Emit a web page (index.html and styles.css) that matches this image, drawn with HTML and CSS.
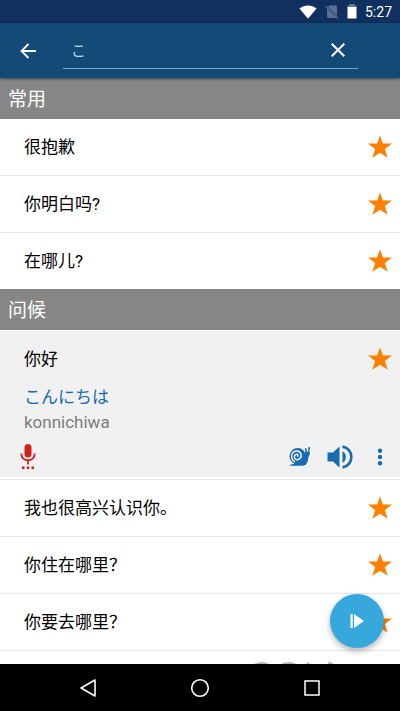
FILE: index.html
```html
<!DOCTYPE html>
<html lang="zh-CN">
<head>
<meta charset="utf-8">
<meta name="viewport" content="width=device-width, initial-scale=1">
<title>常用</title>
<link rel="stylesheet" href="styles.css">
</head>
<body>
<svg class="defs" aria-hidden="true">
  <symbol id="star" viewBox="0 0 24 24"><path d="M12 .4 14.9 8.4 24 8.6 16.9 14.1 19.6 22.8 12 17.8 4.4 22.8 7.1 14.1 0 8.6 9.1 8.4Z"/></symbol>
</svg>

<div class="status">
  <svg width="18" height="14" viewBox="0 0 18 14" aria-hidden="true"><path fill="#fff" d="M.5 3.6C5.500-.6 12.500-.6 17.500 3.600L9 13.800Z"/></svg>
  <svg width="14" height="14" viewBox="0 0 14 14" aria-hidden="true"><path fill="#5a6e95" d="M4.500.500H10.500Q12 .500 12 2V10.800L3 1.800ZM2 3.200 11.500 13H3.500Q2 13 2 11.500Z"/><path stroke="#5a6e95" stroke-width="1.200" d="M.500.800 13 13.300"/></svg>
  <svg class="battery" width="10" height="15" viewBox="0 0 10 15" aria-hidden="true"><path fill="#6b7da3" d="M2.500 0H7.500V1.500H9.500V4H.500V1.500H2.500Z"/><path fill="#fff" d="M.500 3H9.500V14.500H.500Z"/></svg>
  <time>5:27</time>
</div>

<header class="appbar">
  <button class="icon-btn" aria-label="返回"><svg width="16" height="16" viewBox="0 0 16 16"><path fill="none" stroke="#fff" stroke-width="1.800" d="M16 8H2M8.500 1 1.500 8 8.500 15"/></svg></button>
  <div class="search">
    <input type="text" value="こ" aria-label="搜索">
    <button class="icon-btn" aria-label="清除"><svg width="14" height="14" viewBox="0 0 14 14"><path fill="none" stroke="#fff" stroke-width="2" d="M.700.700 13.300 13.300M13.300.700.700 13.300"/></svg></button>
  </div>
</header>

<main class="content">
  <section>
    <h2>常用</h2>
    <ul>
      <li class="row"><span>很抱歉</span><button class="star" aria-label="收藏"><svg><use href="#star"/></svg></button></li>
      <li class="row"><span>你明白吗?</span><button class="star" aria-label="收藏"><svg><use href="#star"/></svg></button></li>
      <li class="row"><span>在哪儿?</span><button class="star" aria-label="收藏"><svg><use href="#star"/></svg></button></li>
    </ul>
  </section>
  <section>
    <h2>问候</h2>
    <ul>
      <li class="open">
        <div class="row"><span>你好</span><button class="star" aria-label="收藏"><svg><use href="#star"/></svg></button></div>
        <p class="kana" lang="ja">こんにちは</p>
        <p class="romaji">konnichiwa</p>
        <div class="tools">
          <button class="mic" aria-label="录音"><svg width="16" height="26" viewBox="0 0 16 26"><rect x="4.500" y="0" width="7" height="13.500" rx="3.500" fill="#d3201f"/><path fill="none" stroke="#d3201f" stroke-width="1.800" d="M1.200 9.500C1.200 18.500 14.800 18.500 14.800 9.500M8 16V20.500"/><path fill="#d3201f" d="M2 22.500H4.500V25H2ZM6.800 22.500H9.200V25H6.800ZM11.500 22.500H14V25H11.500Z"/></svg></button>
          <button aria-label="慢速播放"><svg width="22" height="20" viewBox="0 0 22 20"><path fill="#176bb0" d="M.500 18.600C2 17 4 17.200 6 16.500L14 14.500C16 12.500 15.800 8.500 15.600 6.500C16.200 4.500 18 4.300 20 4.800C21.200 5.300 21.300 7.500 20.200 8.500C19.200 9.500 19.300 12 18.600 14.500C17.800 17.300 16 18.800 13 18.800H1Q.200 19 .500 18.600Z"/><circle cx="8.700" cy="9.300" r="8.200" fill="#176bb0"/><path fill="none" stroke="#f1f1f1" stroke-width="1.500" d="M8.300 9.700C9.800 8.500 8.600 6.900 7 7.500C4.800 8.300 4.700 11.700 7.200 12.500C10.300 13.400 13 10.300 12 7.200C10.700 3.300 5.700 3 3.500 6.100C1.600 9 2.600 13 5.800 14.900"/><path stroke="#176bb0" stroke-width="1.300" d="M17.300 6 16.800 2.200M19.700 5.500 20.200 1"/><circle cx="16.700" cy="2.300" r="1" fill="#176bb0"/><circle cx="20.200" cy="1.100" r="1" fill="#176bb0"/></svg></button>
          <button aria-label="播放"><svg width="26" height="24" viewBox="0 0 26 24"><path fill="#176bb0" d="M.500 7.500H6L12.500 1.500V22.500L6 16.500H.500ZM15.500 6.200C20 8 20 16 15.500 17.800Z"/><path fill="none" stroke="#176bb0" stroke-width="2.600" d="M15.500 1.600C27.300 3.500 27.300 20.500 15.500 22.400"/></svg></button>
          <button aria-label="更多"><svg width="6" height="18" viewBox="0 0 6 18"><g fill="#176bb0"><circle cx="3" cy="2.800" r="2.200"/><circle cx="3" cy="9" r="2.200"/><circle cx="3" cy="15.200" r="2.200"/></g></svg></button>
        </div>
      </li>
      <li class="row"><span>我也很高兴认识你。</span><button class="star" aria-label="收藏"><svg><use href="#star"/></svg></button></li>
      <li class="row"><span>你住在哪里？</span><button class="star" aria-label="收藏"><svg><use href="#star"/></svg></button></li>
      <li class="row"><span>你要去哪里？</span><button class="star" aria-label="收藏"><svg><use href="#star"/></svg></button></li>
      <li class="partial"><svg width="84" height="14" viewBox="0 0 84 14" aria-hidden="true"><path fill="#b5b5b5" d="M1 14Q11 8 20 14ZM28 14Q38 8 47 14ZM54 14 57 11 60 14ZM76 14 78 10.500 84 13.500V14Z"/></svg></li>
    </ul>
  </section>
  <button class="fab" aria-label="全部播放"><svg width="14" height="14" viewBox="0 0 14 14"><path fill="#fff" d="M.500 0H2.700V14H.500ZM4 0 14 7 4 14Z"/></svg></button>
</main>

<nav class="navbar">
  <button aria-label="后退"><svg width="18" height="20" viewBox="0 0 18 20"><path fill="none" stroke="#fff" stroke-width="1.600" stroke-linejoin="round" d="M16 2V18L2 10Z"/></svg></button>
  <button aria-label="主页"><svg width="20" height="20" viewBox="0 0 20 20"><circle cx="10" cy="10" r="8.300" fill="none" stroke="#fff" stroke-width="1.600"/></svg></button>
  <button aria-label="最近"><svg width="18" height="18" viewBox="0 0 18 18"><rect x="2" y="2" width="14" height="14" fill="none" stroke="#fff" stroke-width="1.500"/></svg></button>
</nav>
</body>
</html>
```
FILE: styles.css
```css
* {
  box-sizing: border-box;
}

body {
  margin: 0;
  height: 100vh;
  display: flex;
  flex-direction: column;
  overflow: hidden;
  background: #fff;
  color: #000;
  font: 17px/24px Roboto, "Noto Sans CJK SC", sans-serif;
}

button {
  display: flex;
  align-items: center;
  justify-content: center;
  padding: 0;
  border: 0;
  background: none;
}

ul,
h2,
p {
  margin: 0;
  padding: 0;
  list-style: none;
}

.defs {
  display: none;
}

.status {
  flex: none;
  display: flex;
  align-items: center;
  justify-content: flex-end;
  gap: 8px;
  height: 23px;
  padding-right: 8px;
  background: #12305f;
  color: #fff;
  font-size: 14px;
}

.status time {
  line-height: 24px;
}

.appbar {
  flex: none;
  display: flex;
  align-items: center;
  gap: 23px;
  height: 55px;
  padding: 0 42px 0 16px;
  background: #134a78;
  box-shadow: 0 1px 3px rgba(0, 0, 0, 0.5);
  position: relative;
  z-index: 1;
}

.icon-btn {
  flex: none;
  width: 24px;
  height: 24px;
}

.search {
  flex: 1;
  min-width: 0;
  display: flex;
  align-items: center;
  height: 36px;
  padding: 0 8px;
  border-bottom: 1px solid #7fa3c8;
}

.search input {
  flex: 1;
  min-width: 0;
  padding: 0;
  border: 0;
  outline: 0;
  background: none;
  color: #b9dcf5;
  font: 15px/24px "Noto Sans CJK JP", sans-serif;
}

.content {
  position: relative;
  flex: 1;
  min-height: 0;
  overflow: hidden;
}

h2 {
  height: 41px;
  padding: 2px 0 0 8px;
  background: #868686;
  color: #fff;
  font-size: 19px;
  font-weight: 400;
  line-height: 40px;
}

.row {
  display: flex;
  align-items: center;
  justify-content: space-between;
  height: 56px;
  padding: 0 8px 0 24px;
}

.row span {
  line-height: 26px;
}

li.row {
  height: 57px;
  border-bottom: 1px solid #e8e8e8;
}

li.row:last-child {
  height: 56px;
  border-bottom: 0;
}

.star,
.star svg {
  width: 24px;
  height: 24px;
  fill: #ff8000;
}

.open {
  height: 150px;
  padding-bottom: 2px;
  border-top: 1px solid #fff;
  border-bottom: 1px solid #e8e8e8;
  background: #f1f1f1 content-box;
}

.kana,
.romaji {
  padding-left: 24px;
  line-height: 26px;
}

.kana {
  margin-top: -4px;
  color: #176bb0;
  font-family: "Noto Sans CJK JP", sans-serif;
}

.romaji {
  color: #7d7d7d;
}

.tools {
  display: flex;
  align-items: center;
  gap: 16px;
  height: 44px;
  padding: 0 17px 0 20px;
}

.tools .mic {
  margin-right: auto;
}

.tools button:last-child {
  margin-left: 8px;
}

.partial {
  height: 56px;
  padding-left: 251px;
}

.partial svg {
  display: block;
}

.fab {
  position: absolute;
  right: 16px;
  bottom: 16px;
  width: 54px;
  height: 54px;
  border-radius: 50%;
  background: #36a8dc;
  box-shadow: 0 3px 6px rgba(0, 0, 0, 0.3);
}

.navbar {
  flex: none;
  display: flex;
  align-items: center;
  justify-content: center;
  height: 47px;
  background: #000;
}

.navbar button {
  width: 28%;
  height: 47px;
}
```
